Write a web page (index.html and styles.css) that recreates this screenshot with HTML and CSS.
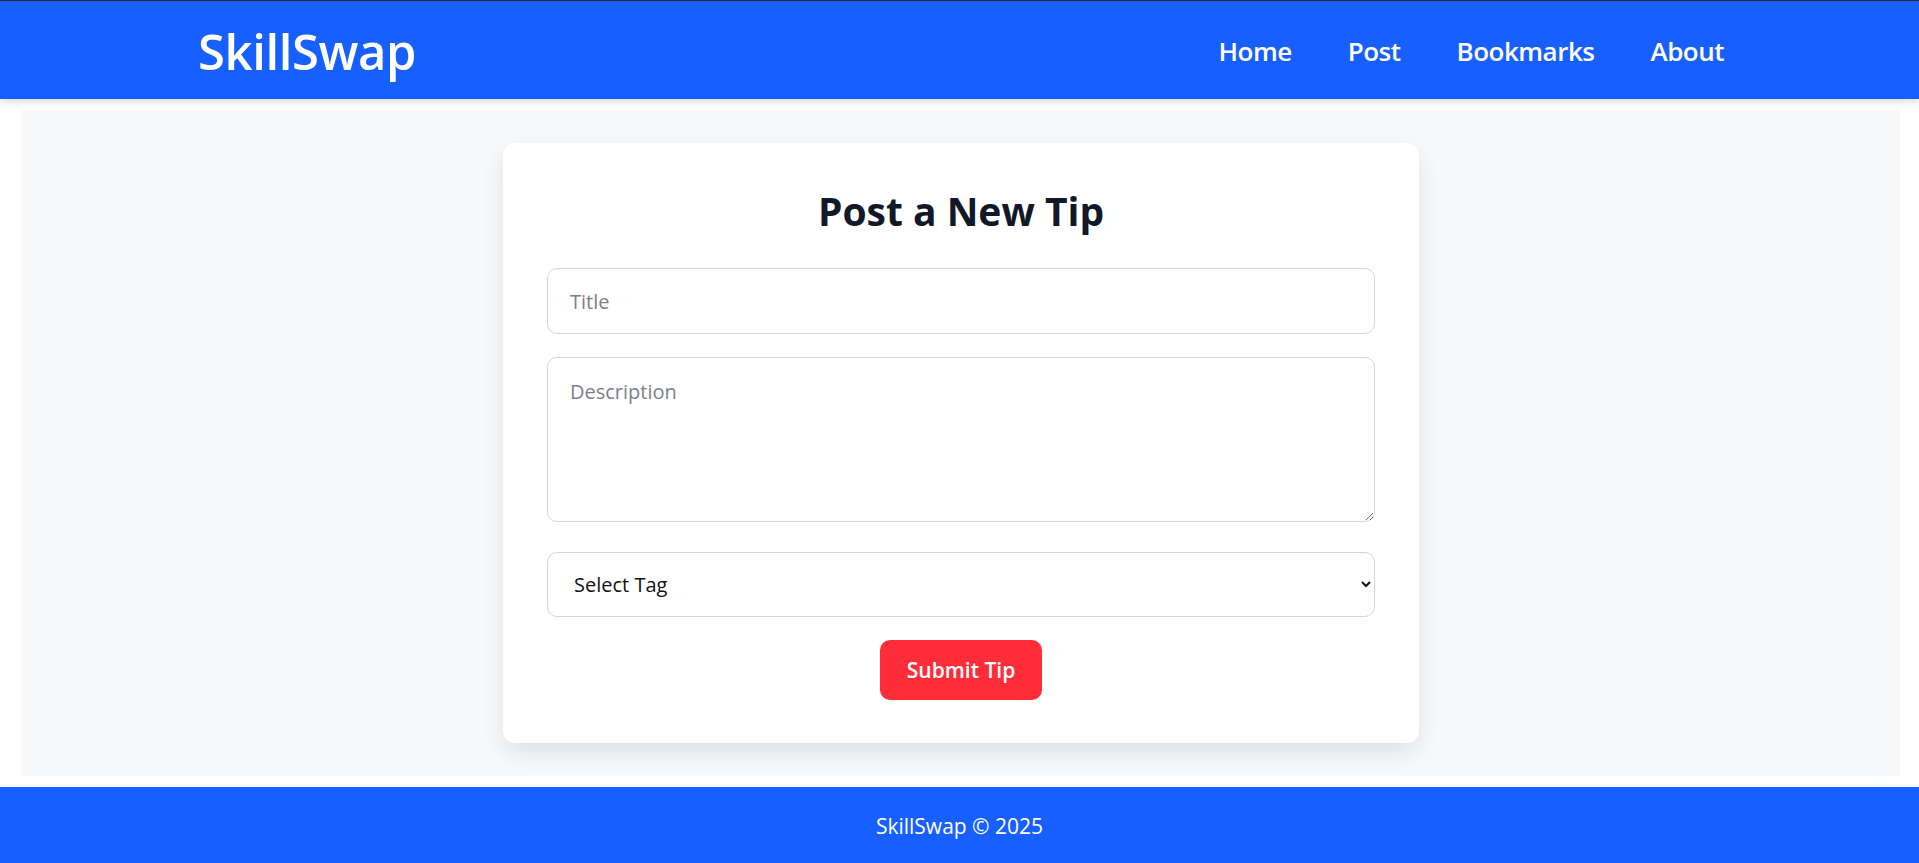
FILE: index.html
```html
<!DOCTYPE html>
<html lang="en">
<head>
<meta charset="utf-8">
<title>SkillSwap - Post a New Tip</title>
<link rel="stylesheet" href="styles.css">
</head>
<body>
<header class="site-header">
  <div class="header-inner">
    <a class="logo" href="#">SkillSwap</a>
    <nav class="nav">
      <a href="#">Home</a>
      <a href="#">Post</a>
      <a href="#">Bookmarks</a>
      <a href="#">About</a>
    </nav>
  </div>
</header>
<main class="main">
  <section class="card">
    <h2 class="card-title">Post a New Tip</h2>
    <form class="tip-form">
      <input class="field field-input" type="text" placeholder="Title">
      <textarea class="field field-area" placeholder="Description"></textarea>
      <select class="field field-select">
        <option>Select Tag</option>
        <option>Coding</option>
        <option>Design</option>
        <option>Productivity</option>
      </select>
      <button class="submit" type="button">Submit Tip</button>
    </form>
  </section>
</main>
<footer class="site-footer">SkillSwap © 2025</footer>
</body>
</html>
```
FILE: styles.css
```css
* { box-sizing: border-box; }
html, body { margin: 0; padding: 0; }
body {
  font-family: "Open Sans", "Noto Sans", sans-serif;
  background: #ffffff;
  color: #111827;
}
.site-header {
  background: #175fff;
  border-top: 1px solid #2b2b2b;
  height: 99px;
  box-shadow: 0 2px 8px rgba(0, 0, 0, 0.16);
  position: relative;
  z-index: 1;
}
.header-inner {
  height: 100%;
  padding: 2px 195px 0 198px;
  display: flex;
  align-items: center;
  justify-content: space-between;
}
.logo {
  color: #fff;
  text-decoration: none;
  font-size: 49px;
  font-weight: 600;
  letter-spacing: -0.4px;
}
.nav {
  display: flex;
  gap: 56px;
}
.nav a {
  color: #fff;
  text-decoration: none;
  font-size: 26px;
  font-weight: 600;
  letter-spacing: -0.5px;
}
.main {
  background: #f8f9fa;
  margin: 11px 19px 11px 22px;
  padding: 33px 0 33px;
  display: flex;
  justify-content: center;
}
.card {
  width: 916px;
  background: #fff;
  border-radius: 12px;
  padding: 44px 44px 43px;
  box-shadow: 0 10px 25px rgba(0, 0, 0, 0.1);
}
.card-title {
  margin: 0 0 33px;
  text-align: center;
  font-size: 39px;
  line-height: 48px;
  font-weight: 700;
  color: #111827;
  letter-spacing: 0;
}
.tip-form {
  display: flex;
  flex-direction: column;
}
.field {
  font-family: "Open Sans", "Noto Sans", sans-serif;
  font-size: 20px;
  border: 1px solid #d4d5dc;
  border-radius: 10px;
  background: #fff;
  color: #111;
  width: 100%;
  outline: none;
}
.field-input {
  height: 66px;
  padding: 0 22px;
  margin-bottom: 23px;
}
.field-area {
  height: 165px;
  padding: 20px 22px;
  margin-bottom: 30px;
  resize: vertical;
}
.field::placeholder { color: #7d8088; }
.field-select {
  height: 65px;
  padding: 0 22px;
  margin-bottom: 23px;
  color: #111;
}
.submit {
  align-self: center;
  height: 60px;
  padding: 0 27px;
  border: none;
  border-radius: 10px;
  background: #ff2d3a;
  color: #fff;
  font-family: "Open Sans", "Noto Sans", sans-serif;
  font-size: 21px;
  font-weight: 600;
}
.site-footer {
  background: #175fff;
  color: #fff;
  text-align: center;
  font-size: 21px;
  line-height: 24px;
  padding: 27px 0 27px;
}
```
